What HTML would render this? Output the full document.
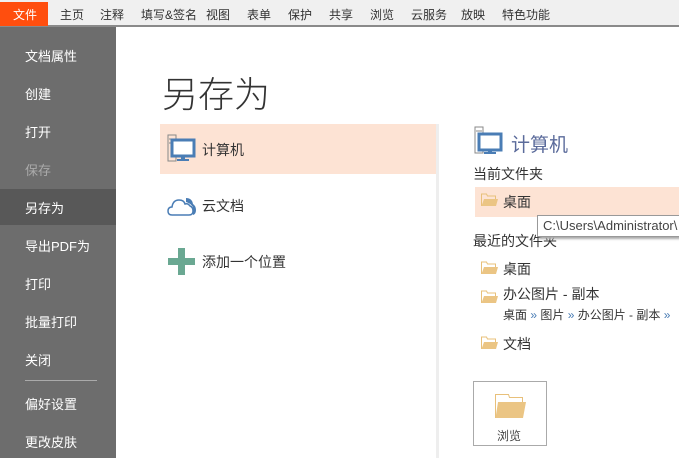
<!DOCTYPE html><html><head><meta charset="utf-8"><style>
*{margin:0;padding:0;box-sizing:border-box}
body{width:679px;height:458px;overflow:hidden;background:#fff;font-family:"Liberation Sans","Noto Sans CJK SC",sans-serif;position:relative;color:#333}
.a{position:absolute;white-space:nowrap}
#top{position:absolute;left:0;top:0;width:679px;height:27px;background:#f0f0f0;border-bottom:2px solid #8a8a8a}
.n{position:absolute;top:6px;font-size:12px;color:#333}
#side{position:absolute;left:0;top:27px;width:116px;height:431px;background:#6d6d6d}
.s{position:absolute;left:25px;font-size:13px;color:#fff}
</style></head><body>
<div id="top"></div>
<div class="a" style="left:0;top:2px;width:48px;height:24px;background:#ff4e0e"></div>
<div class="n" style="left:13px;color:#fff">文件</div>
<div class="n" style="left:60px">主页</div>
<div class="n" style="left:100px">注释</div>
<div class="n" style="left:141px">填写&amp;签名</div>
<div class="n" style="left:206px">视图</div>
<div class="n" style="left:247px">表单</div>
<div class="n" style="left:288px">保护</div>
<div class="n" style="left:329px">共享</div>
<div class="n" style="left:370px">浏览</div>
<div class="n" style="left:411px">云服务</div>
<div class="n" style="left:461px">放映</div>
<div class="n" style="left:502px">特色功能</div>
<div id="side"></div>
<div class="a" style="left:0;top:189px;width:116px;height:36px;background:#585858"></div>
<div class="s" style="top:46px">文档属性</div>
<div class="s" style="top:84px">创建</div>
<div class="s" style="top:122px">打开</div>
<div class="s" style="top:160px;color:#aaa">保存</div>
<div class="s" style="top:198px">另存为</div>
<div class="s" style="top:236px">导出PDF为</div>
<div class="s" style="top:274px">打印</div>
<div class="s" style="top:312px">批量打印</div>
<div class="s" style="top:350px">关闭</div>
<div class="a" style="left:25px;top:380px;width:72px;height:1px;background:#aaa"></div>
<div class="s" style="top:394px">偏好设置</div>
<div class="s" style="top:432px">更改皮肤</div>
<div class="a" style="left:162px;top:66px;font-size:36px;color:#333;font-weight:300">另存为</div>
<div class="a" style="left:160px;top:124px;width:276px;height:50px;background:#fde3d4"></div>
<div class="a" style="left:436px;top:124px;width:3px;height:334px;background:#eee"></div>
<svg class="a" style="left:167px;top:134px" width="30" height="30" viewBox="0 0 30 30"><rect x="1" y="1" width="8" height="26" fill="none" stroke="#888"/><line x1="2" y1="5" x2="8" y2="5" stroke="#888"/><line x1="2" y1="9" x2="8" y2="9" stroke="#888"/><rect x="5" y="6" width="22" height="16" fill="#fff" stroke="#4a7db5" stroke-width="3"/><rect x="14" y="22" width="4" height="3" fill="#4a7db5"/><rect x="10" y="25" width="12" height="2" fill="#4a7db5"/></svg>
<div class="a" style="left:202px;top:140px;font-size:14px">计算机</div>
<svg class="a" style="left:167px;top:194px" width="30" height="24" viewBox="0 0 30 24"><path d="M5 21 Q1 21 1 17 Q1 13 5 13 Q6 6 12 6 Q17 6 18 10 Q21 9 23 12 Q26 13 26 17 Q26 21 22 21Z" fill="#fff" stroke="#4a7db5" stroke-width="1.5"/><path d="M19 4 Q25 4 26 10 Q29 12 29 16 Q29 20 26 21 L26 13 Q23 9 19 8Z" fill="#4a7db5"/></svg>
<div class="a" style="left:202px;top:196px;font-size:14px">云文档</div>
<svg class="a" style="left:168px;top:248px" width="27" height="27"><rect x="10" y="0" width="7" height="27" fill="#6aa892"/><rect x="0" y="10" width="27" height="7" fill="#6aa892"/></svg>
<div class="a" style="left:202px;top:252px;font-size:14px">添加一个位置</div>
<svg class="a" style="left:474px;top:126px" width="30" height="30" viewBox="0 0 30 30"><rect x="1" y="1" width="8" height="26" fill="none" stroke="#888"/><line x1="2" y1="5" x2="8" y2="5" stroke="#888"/><rect x="5" y="8" width="22" height="16" fill="#fff" stroke="#4a7db5" stroke-width="3"/><rect x="14" y="24" width="4" height="2" fill="#4a7db5"/><rect x="10" y="26" width="12" height="2" fill="#4a7db5"/></svg>
<div class="a" style="left:511px;top:130px;font-size:19px;color:#5b6b9b">计算机</div>
<div class="a" style="left:473px;top:164px;font-size:14px">当前文件夹</div>
<div class="a" style="left:475px;top:187px;width:204px;height:30px;background:#fde3d4"></div>
<svg class="a" style="left:481px;top:193px" width="17" height="14"><path d="M0.5 13V1h5l1 2h8v3" fill="none" stroke="#e8c07a"/><path d="M0.5 13L3 6h14l-2 7z" fill="#ebc584"/></svg>
<div class="a" style="left:503px;top:192px;font-size:14px">桌面</div>
<div class="a" style="left:537px;top:215px;width:150px;height:22px;background:#fff;border:1px solid #999;box-shadow:2px 2px 2px #aaa;font-size:13px;padding:2px 5px;color:#444">C:\Users\Administrator\</div>
<div class="a" style="left:473px;top:231px;font-size:14px;z-index:-1">最近的文件夹</div>
<svg class="a" style="left:481px;top:261px" width="17" height="14"><path d="M0.5 13V1h5l1 2h8v3" fill="none" stroke="#e8c07a"/><path d="M0.5 13L3 6h14l-2 7z" fill="#ebc584"/></svg>
<div class="a" style="left:503px;top:259px;font-size:14px">桌面</div>
<svg class="a" style="left:481px;top:290px" width="17" height="14"><path d="M0.5 13V1h5l1 2h8v3" fill="none" stroke="#e8c07a"/><path d="M0.5 13L3 6h14l-2 7z" fill="#ebc584"/></svg>
<div class="a" style="left:503px;top:284px;font-size:14px">办公图片 - 副本</div>
<div class="a" style="left:503px;top:306px;font-size:12px">桌面 <span style="color:#4a7db5">»</span> 图片 <span style="color:#4a7db5">»</span> 办公图片 - 副本 <span style="color:#4a7db5">»</span></div>
<svg class="a" style="left:481px;top:336px" width="17" height="14"><path d="M0.5 13V1h5l1 2h8v3" fill="none" stroke="#e8c07a"/><path d="M0.5 13L3 6h14l-2 7z" fill="#ebc584"/></svg>
<div class="a" style="left:503px;top:334px;font-size:14px">文档</div>
<div class="a" style="left:473px;top:381px;width:74px;height:65px;border:1px solid #aaa"></div>
<svg class="a" style="left:495px;top:394px" width="31" height="25"><path d="M0.5 24V0.5h13l1 3h13v6" fill="none" stroke="#e8c07a"/><path d="M0.5 24L3 8h28l-3 16z" fill="#ebc584"/></svg>
<div class="a" style="left:497px;top:427px;font-size:12px;color:#444">浏览</div>
</body></html>
